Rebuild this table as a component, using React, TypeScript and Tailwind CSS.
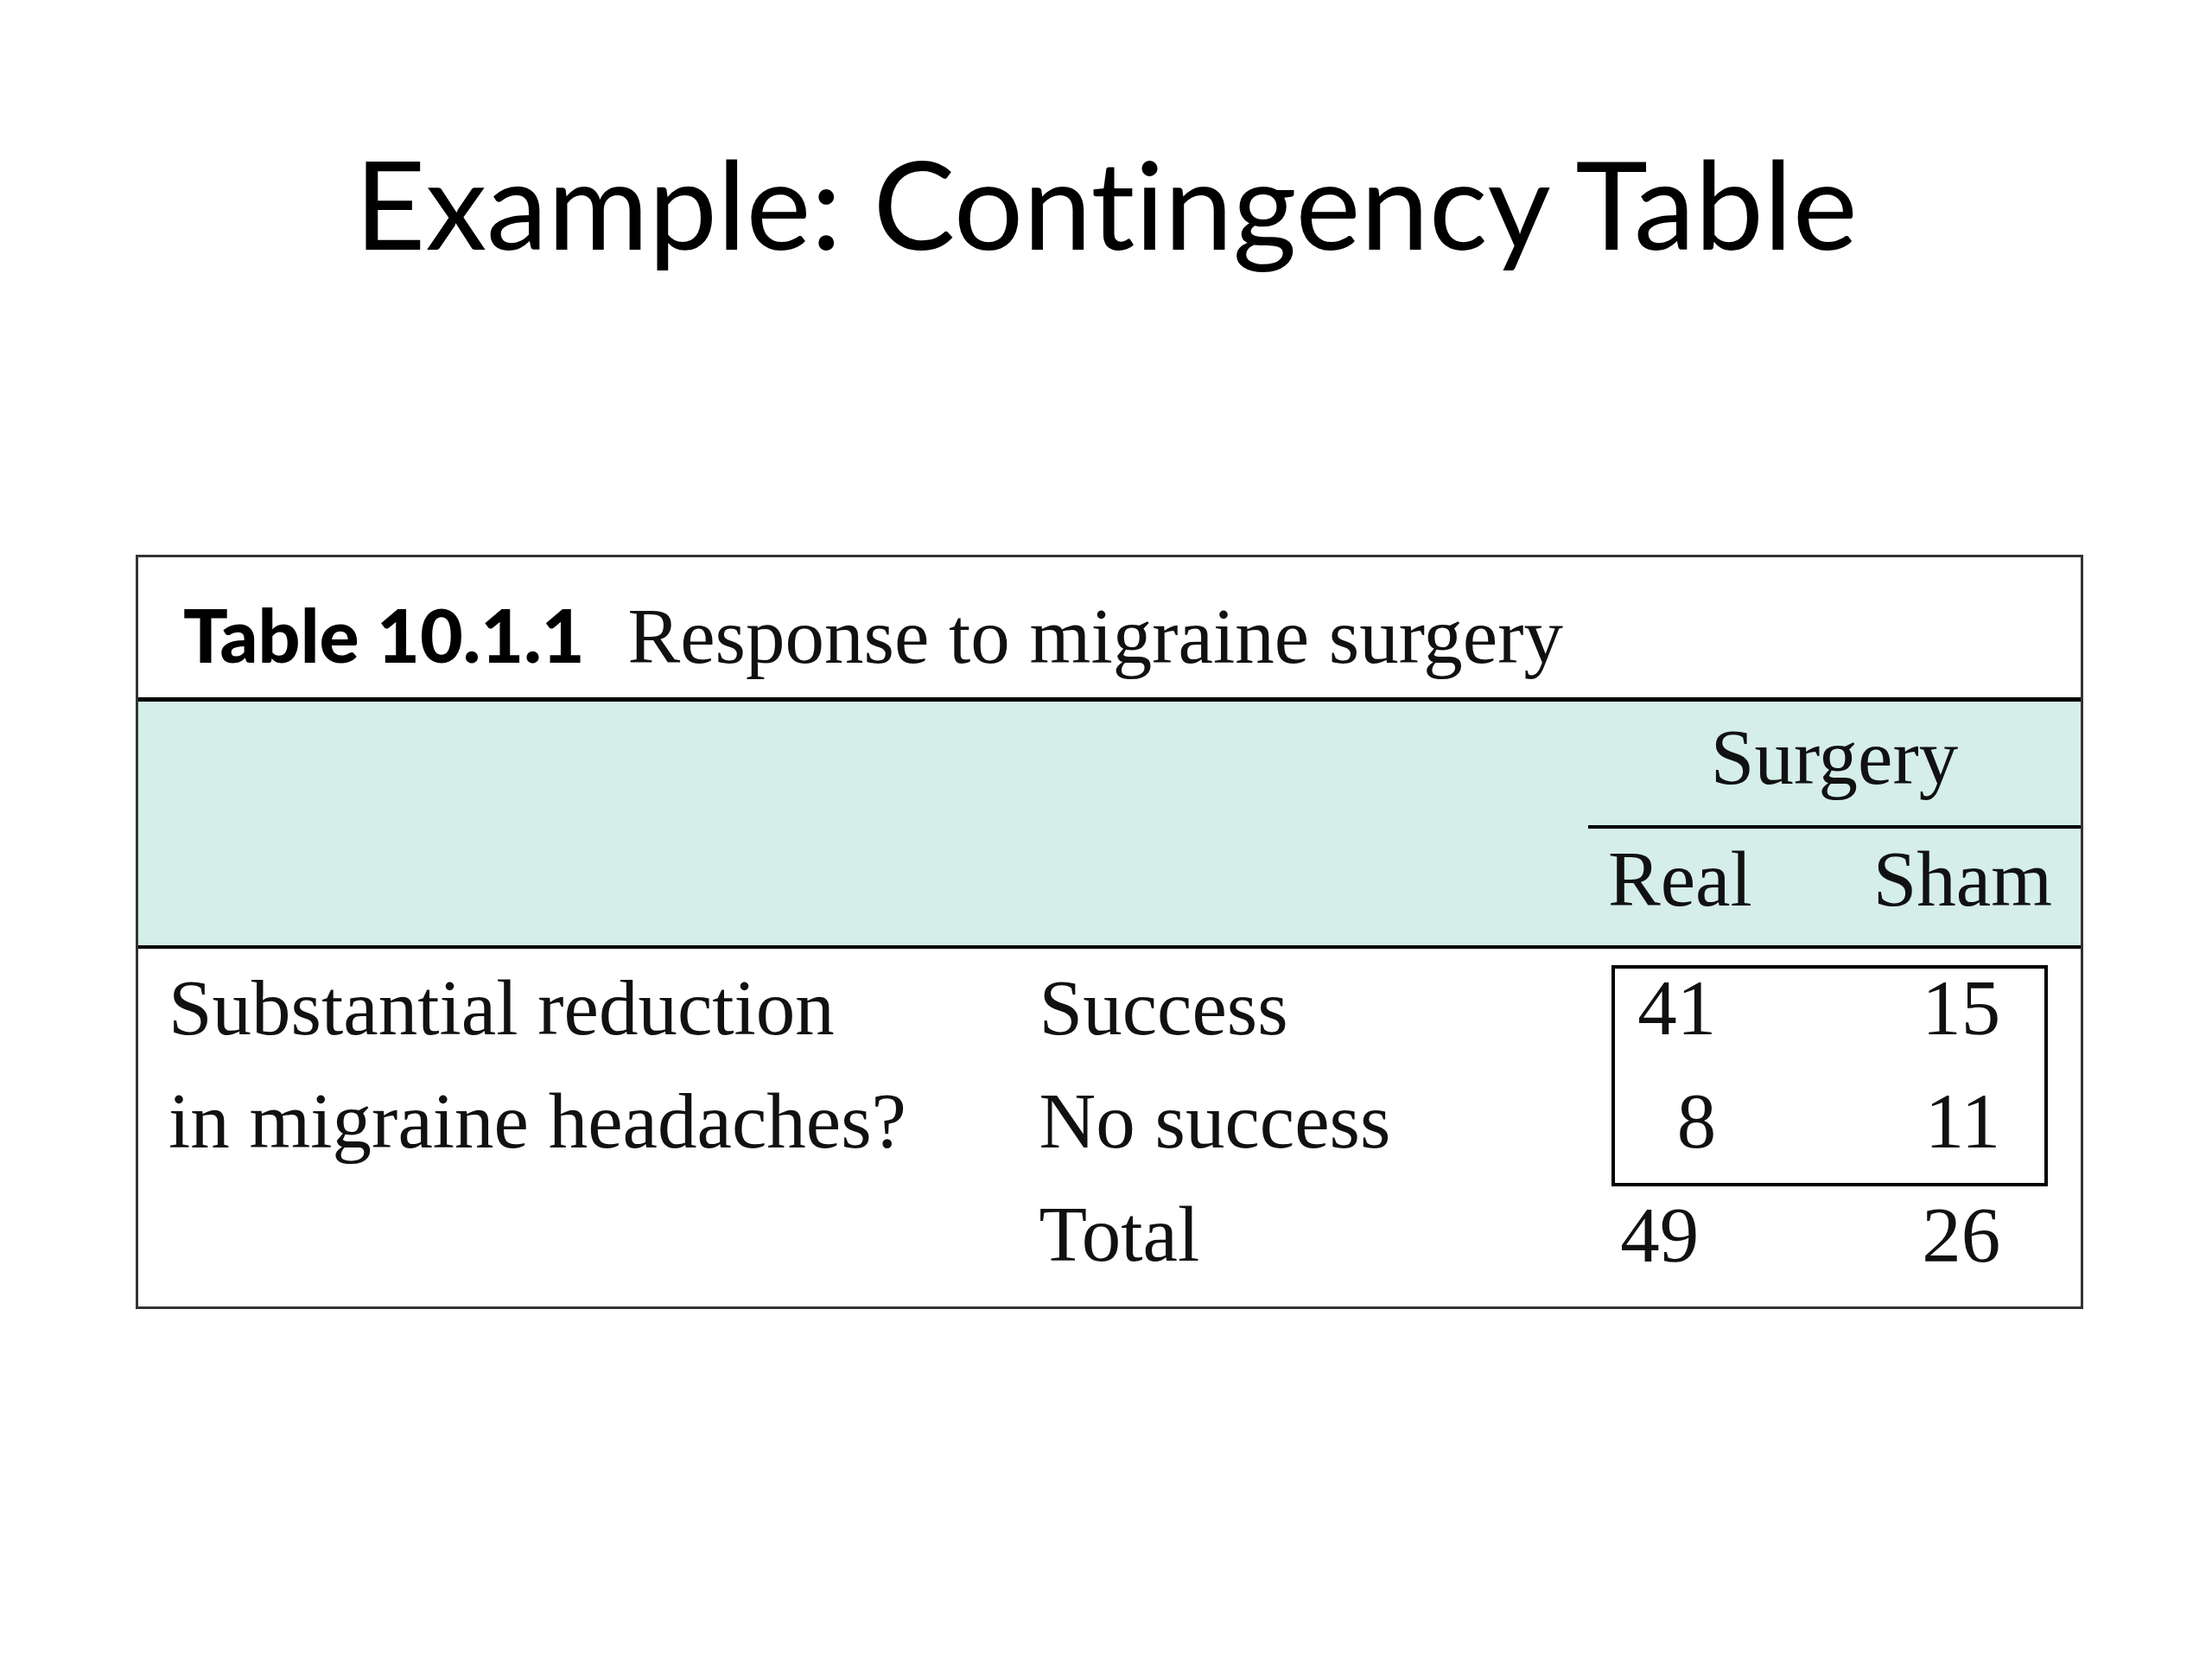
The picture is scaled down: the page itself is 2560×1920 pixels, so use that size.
import React from "react";

const serif = "font-['Liberation_Serif','Times_New_Roman',serif]";

const App: React.FC = () => {
  return (
    <div className="w-full h-[1920px] bg-white text-black overflow-hidden">
      <h1 className="pt-[163px] text-center font-['Lato',sans-serif] text-[142px] leading-none font-normal [font-variant-ligatures:none]">
        Example: Contingency Table
      </h1>

      <div className={`mt-[337px] ml-[157px] w-[2254px] border-[3px] border-[#333] ${serif} text-[91px] text-[#111]`}>
        {/* caption */}
        <div className="h-[162px] flex items-baseline pl-[52px] pt-[43px] leading-[92px]">
          <span className="font-['Lato',sans-serif] font-black text-[86px] text-black">Table 10.1.1</span>
          <span className="ml-[50px]">Response to migraine surgery</span>
        </div>
        <div className="h-[5px] bg-black" />

        {/* header */}
        <div className="h-[282px] bg-[#d5eee9] flex justify-end">
          <div className="w-[570px] pt-[19px]">
            <div className="leading-[92px] text-center pb-[32px] border-b-[4px] border-black">Surgery</div>
            <div className="mt-[13px] leading-[92px] flex justify-between pl-[23px] pr-[33px]">
              <span>Real</span>
              <span>Sham</span>
            </div>
          </div>
        </div>
        <div className="h-[4px] bg-black" />

        {/* body */}
        <div className="h-[414px] flex">
          <div className="w-[1043px] pl-[35px] pt-[3px] leading-[131px]">
            <div>Substantial reduction</div>
            <div>in migraine headaches?</div>
          </div>
          <div className="w-[636px] pt-[3px] leading-[131px]">
            <div>Success</div>
            <div>No success</div>
            <div>Total</div>
          </div>
          <div className="w-[570px]">
            <div className="mt-[19px] ml-[27px] w-[505px] h-[256px] border-[4px] border-black leading-[92px]">
              <div className="flex">
                <span className="w-[117px] text-right">41</span>
                <span className="w-[329px] text-right">15</span>
              </div>
              <div className="flex mt-[39px]">
                <span className="w-[117px] text-right">8</span>
                <span className="w-[329px] text-right">11</span>
              </div>
            </div>
            <div className="flex mt-[11px] leading-[92px]">
              <span className="w-[128px] text-right">49</span>
              <span className="w-[349px] text-right">26</span>
            </div>
          </div>
        </div>
      </div>
    </div>
  );
};

export default App;
